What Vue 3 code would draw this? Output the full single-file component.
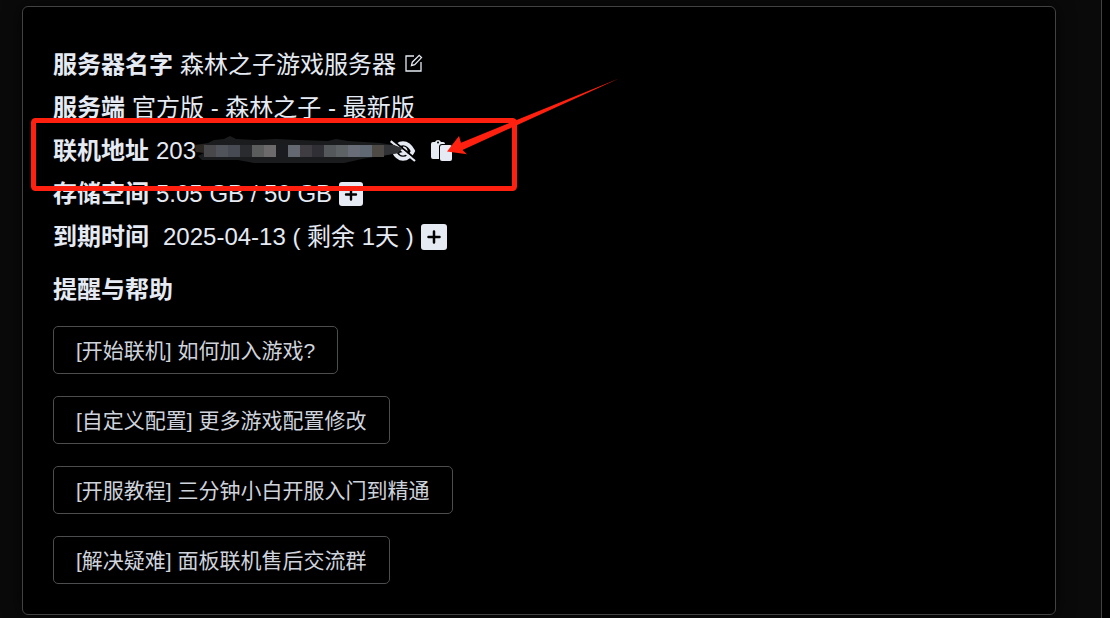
<script setup>
const guides = [
  '[开始联机] 如何加入游戏?',
  '[自定义配置] 更多游戏配置修改',
  '[开服教程] 三分钟小白开服入门到精通',
  '[解决疑难] 面板联机售后交流群',
]

const mosaic = [
  '#48484b', '#50545a', '#484a53', '#2a2b2e', '#5b5c5c', '#6d6a6b', '#1b1c20', '#646870',
  '#403d42', '#2f2f35', '#55585a', '#5d6265', '#686d77', '#5f6873', '#4d4944',
]
</script>

<template>
  <main class="panel">
    <section class="card">
      <div class="row">
        <strong>服务器名字</strong>
        <span>森林之子游戏服务器</span>
        <button class="icon edit" type="button" aria-label="编辑名字">
          <svg width="18" height="18" viewBox="0 0 18 18" fill="none" stroke="currentColor" stroke-width="1.3">
            <path d="M9 2H1v15h15V8" />
            <path d="M6.500 11.500l.8-3.300L14.200 1.300l2.300 2.300L9.700 10.600z" />
          </svg>
        </button>
      </div>
      <div class="row">
        <strong>服务端</strong>
        <span>官方版 - 森林之子 - 最新版</span>
      </div>
      <div class="row">
        <strong>联机地址</strong>
        <span class="address">203
          <svg class="smudge" width="210" height="32" viewBox="0 0 210 32" aria-hidden="true">
            <path d="M1 11L14 9L20 6L30 5L36 2L42 5L62 6L82 5L104 6L134 7L142 5L154 7L186 9L199 11L208 15L204 19L186 22L168 25L150 29L60 29L44 26L8 26L4 22L10 19L1 17z" fill="#1b1c1d" />
            <path d="M1 11L12 10V19L2 18z" fill="#2b2723" />
            <path d="M188 11L200 11L208 14L204 19L188 22z" fill="#303236" />
            <rect v-for="(color, i) in mosaic" :key="i" :x="10 + i * 12" y="11" width="12" height="12" :fill="color" shape-rendering="crispEdges" />
          </svg>
        </span>
        <button class="icon eye" type="button" aria-label="隐藏地址">
          <svg width="26" height="22" viewBox="0 0 26 22" fill="none" stroke="currentColor">
            <path d="M3.500 11C6 5.500 9 3.200 13 3.200S20.500 6 23 11C20.500 16.500 17 18.800 13 18.800S6 16.500 3.500 11z" stroke-width="4" />
            <path d="M13 6.500A4.500 4.500 0 1 1 9 13L13 12z" fill="currentColor" stroke="none" />
            <path d="M2.500 .3L26 19.300" stroke="#000" stroke-width="2" />
            <path d="M.7 1.200L25 21" stroke-width="2.200" />
          </svg>
        </button>
        <button class="icon copy" type="button" aria-label="复制地址">
          <svg width="22" height="22" viewBox="0 0 22 22" fill="currentColor">
            <path d="M2 2H4Q5 0 7 0T10 2H12Q14 2 14 4H11Q8 4 8 7V19H2Q0 19 0 17V4Q0 2 2 2z" />
            <circle cx="7" cy="2.500" r="1" fill="#000" />
            <rect x="9" y="5" width="12" height="16" rx="2" />
          </svg>
        </button>
      </div>
      <div class="row">
        <strong>存储空间</strong>
        <span>5.05 GB / 50 GB</span>
        <button class="icon" type="button" aria-label="增加存储空间">
          <svg width="24" height="24" viewBox="0 0 24 24">
            <rect width="24" height="24" rx="3" fill="currentColor" />
            <path d="M12 7.500v10M7 12.500h10" stroke="#000" stroke-width="2.400" stroke-linecap="round" />
          </svg>
        </button>
      </div>
      <div class="row">
        <strong>到期时间</strong>
        <span class="date">2025-04-13 ( 剩余 1天 )</span>
        <button class="icon" type="button" aria-label="续期">
          <svg width="26" height="26" viewBox="0 0 26 26">
            <rect width="26" height="26" rx="3" fill="currentColor" />
            <path d="M13 7.500v11M7.500 13h11" stroke="#000" stroke-width="2.500" stroke-linecap="round" />
          </svg>
        </button>
      </div>

      <h2>提醒与帮助</h2>
      <div class="guides">
        <button v-for="guide in guides" :key="guide" class="guide" type="button">{{ guide }}</button>
      </div>

      <svg class="annotation" width="600" height="200" viewBox="23 7 600 200" aria-hidden="true">
        <rect x="33.500" y="120.500" width="481" height="68" rx="2" fill="none" stroke="#ff2010" stroke-width="5" />
        <path d="M447 151.500L459 136L461 142.700L619 78.500L462.500 150L467 154.300z" fill="#ff2010" />
      </svg>
    </section>
  </main>
</template>

<style>
body {
  background: #000;
}
</style>

<style scoped>
.panel {
  box-sizing: border-box;
  min-height: 100vh;
  margin-right: 8px;
  padding: 6px 45px 3px 22px;
  border-right: 1px solid #424242;
  background: #0a0a0a;
  color: #e5eaf3;
  font-family: "Liberation Sans", "Noto Sans CJK SC", sans-serif;
}

.card {
  position: relative;
  padding: 36px 30px 30px;
  border: 1px solid #424243;
  border-radius: 6px;
  background: #000;
  box-shadow: 0 0 18px rgba(0, 0, 0, 0.7);
}

.row {
  display: flex;
  align-items: center;
  gap: 7px;
  height: 43px;
  font-size: 24px;
  line-height: 43px;
  white-space: nowrap;
}

.date {
  margin-left: 7px;
}

.address {
  position: relative;
  z-index: 1;
  width: 227px;
}

.smudge {
  position: absolute;
  top: 5px;
  left: 38px;
}

.icon {
  display: flex;
  padding: 0;
  border: 0;
  background: none;
  color: inherit;
}

.edit {
  margin: -4px 0 0 2px;
}

.copy {
  margin-left: 8px;
}

h2 {
  margin: 10px 0 15px;
  font-size: 24px;
  line-height: 43px;
}

.guides {
  display: flex;
  flex-direction: column;
  align-items: flex-start;
  gap: 22px;
}

.guide {
  height: 48px;
  padding: 0 22px 3px;
  border: 1px solid #4c4d4f;
  border-radius: 5px;
  background: transparent;
  color: #cfd3dc;
  font-family: inherit;
  font-size: 21px;
}

.annotation {
  position: absolute;
  z-index: 2;
  top: 0;
  left: 0;
  pointer-events: none;
}
</style>
